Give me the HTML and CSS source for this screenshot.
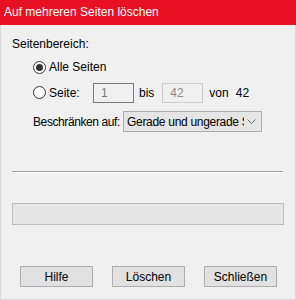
FILE: index.html
```html
<!DOCTYPE html>
<html lang="de">
<head>
  <meta charset="UTF-8">
  <title>Auf mehreren Seiten löschen</title>
  <link rel="stylesheet" href="styles.css">
</head>
<body>
  <div class="window">
    <div class="titlebar">Auf mehreren Seiten löschen</div>

    <div class="content">
      <div class="label">Seitenbereich:</div>

      <div class="radio-row">
        <span class="radio checked"></span>
        <span>Alle Seiten</span>
      </div>

      <div class="radio-row pages">
        <span class="radio"></span>
        <span class="seite">Seite:</span>
        <span class="field">1</span>
        <span class="bis">bis</span>
        <span class="field disabled">42</span>
        <span class="von">von</span>
        <span>42</span>
      </div>

      <div class="limit-row">
        <span class="limit-label">Beschränken auf:</span>
        <div class="select">
          <span class="select-text">Gerade und ungerade Seiten</span>
          <svg class="chevron" width="9" height="5" viewBox="0 0 9 5">
            <polyline points="0.5,0.5 4.5,4.5 8.5,0.5" fill="none" stroke="#666" stroke-width="1"/>
          </svg>
        </div>
      </div>

      <hr class="separator">

      <div class="progress"></div>

      <div class="buttons">
        <button class="btn">Hilfe</button>
        <button class="btn">Löschen</button>
        <button class="btn">Schließen</button>
      </div>
    </div>
  </div>
</body>
</html>
```

FILE: styles.css
```css
body {
  margin: 0;
  background: #f0f0f0;
  font-family: "Liberation Sans", Arial, sans-serif;
  font-size: 12px;
  color: #000;
}
.window {
  width: 296px;
  height: 300px;
  display: flex;
  flex-direction: column;
}
.titlebar {
  height: 25px;
  line-height: 25px;
  background: #e81123;
  color: white;
  padding-left: 4px;
  font-size: 12px;
}
.content {
  flex: 1;
  border: 1px solid #d9d9d9;
  border-top: none;
  padding: 0 11px;
  background: #f0f0f0;
}
.label {
  margin-top: 11px;
  line-height: 16px;
}
.radio-row {
  display: flex;
  align-items: center;
  margin-top: 5px;
  margin-left: 21px;
  height: 20px;
}
.radio {
  width: 13px;
  height: 13px;
  box-sizing: border-box;
  border: 1px solid #333;
  border-radius: 50%;
  background: #fff;
  margin-right: 3px;
  position: relative;
}
.radio.checked::after {
  content: "";
  position: absolute;
  left: 2px;
  top: 2px;
  width: 7px;
  height: 7px;
  border-radius: 50%;
  background: #333;
}
.pages {
  height: 21px;
}
.seite {
  width: 44px;
}
.field {
  box-sizing: border-box;
  width: 41px;
  height: 20px;
  line-height: 18px;
  border: 1px solid #7a7a7a;
  padding-left: 7px;
  color: #7a7a7a;
}
.field.disabled {
  border-color: #cccccc;
  color: #8a8a8a;
}
.bis {
  margin: 0 8px 0 5px;
}
.von {
  margin: 0 7px 0 6px;
}
.limit-row {
  display: flex;
  align-items: center;
  margin-top: 8px;
  margin-left: 21px;
}
.limit-label {
  width: 90px;
  letter-spacing: -0.4px;
  white-space: nowrap;
}
.select {
  box-sizing: border-box;
  width: 139px;
  height: 21px;
  background: #e5e5e5;
  border: 1px solid #acacac;
  display: flex;
  align-items: center;
  padding: 0 5px 0 3px;
}
.select-text {
  flex: 1;
  overflow: hidden;
  white-space: nowrap;
  letter-spacing: -0.3px;
}
.chevron {
  margin-left: 3px;
}
.separator {
  margin: 39px 1px 0 0;
  border: none;
  border-top: 1px solid #a0a0a0;
  border-bottom: 1px solid #fff;
  height: 0;
}
.progress {
  margin-top: 30px;
  height: 22px;
  box-sizing: border-box;
  background: #e6e6e6;
  border: 1px solid #bcbcbc;
}
.buttons {
  display: flex;
  gap: 19px;
  margin-top: 41px;
  padding-left: 8px;
}
.btn {
  width: 73px;
  height: 21px;
  box-sizing: border-box;
  background: #e1e1e1;
  border: 1px solid #adadad;
  font-family: inherit;
  font-size: 12px;
  color: #000;
  padding: 0;
}
```
